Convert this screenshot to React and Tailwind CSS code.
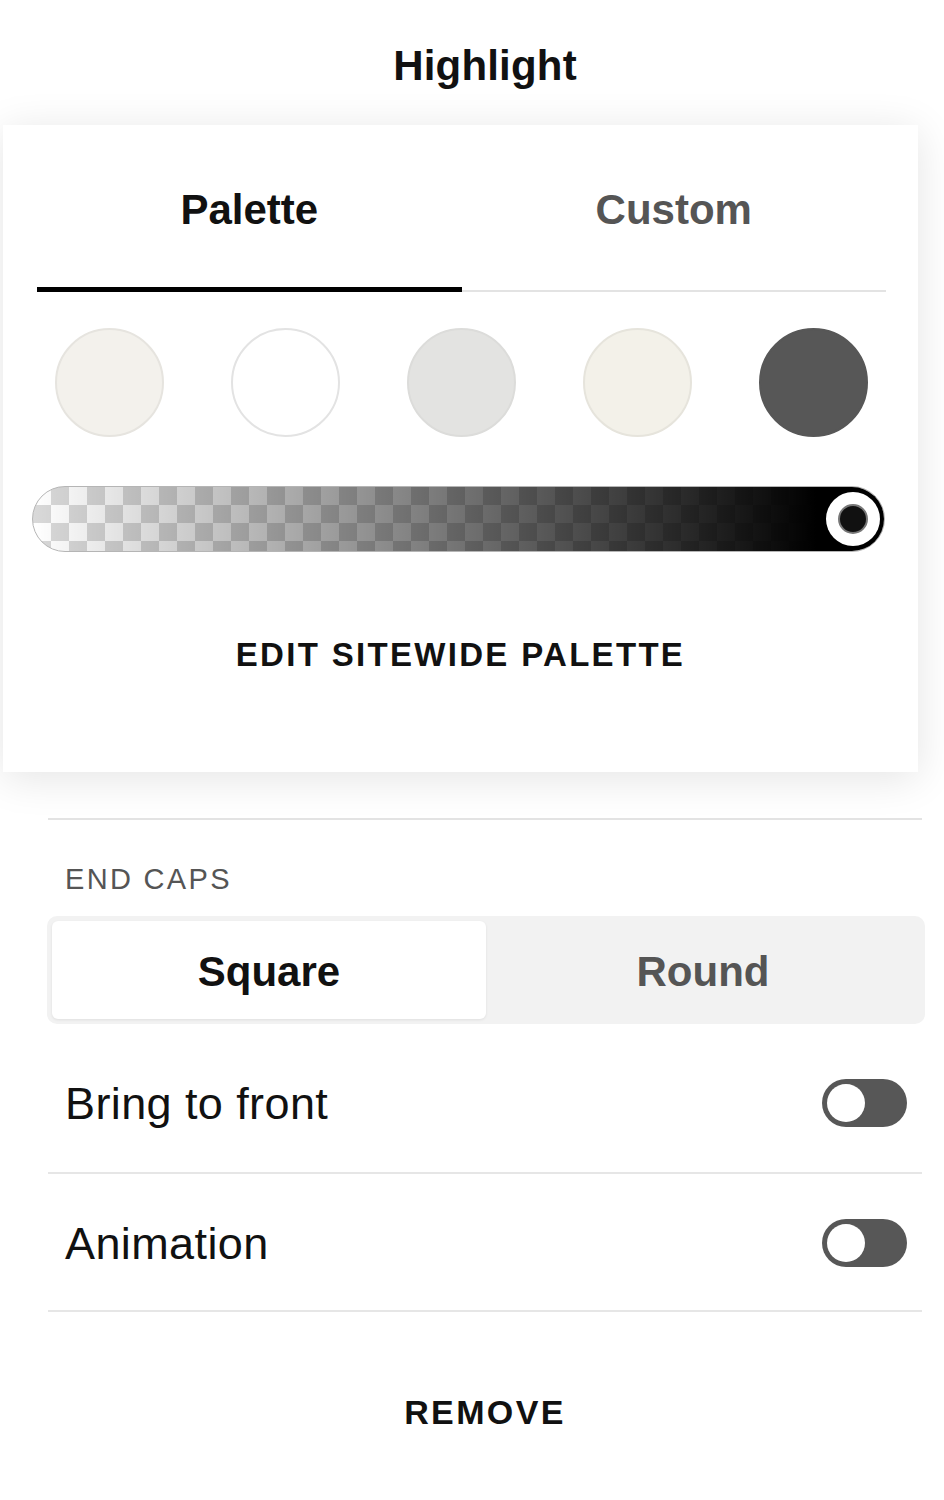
import React from "react";

function Toggle() {
  return (
    <div className="w-[85px] h-[48px] rounded-full bg-[#575757] p-[5px] flex items-center">
      <div className="w-[38px] h-[38px] rounded-full bg-white" />
    </div>
  );
}

export default function App() {
  const swatches = [
    "bg-[#f3f1ec] border-[#e6e4df]",
    "bg-white border-[#e3e3e3]",
    "bg-[#e3e3e1] border-[#dcdcda]",
    "bg-[#f3f1e9] border-[#e6e4dc]",
    "bg-[#575757] border-[#575757]",
  ];
  return (
    <div className="w-[944px] h-[1500px] bg-white overflow-hidden font-['Liberation_Sans',Arial,sans-serif] text-[#111]">
      {/* Title */}
      <div className="h-[125px] flex items-center justify-center pl-[26px] pt-[6px]">
        <span className="text-[42px] font-bold leading-none tracking-[0.2px]">Highlight</span>
      </div>

      {/* Popover card */}
      <div className="relative z-10 ml-[3px] w-[915px] h-[647px] bg-white shadow-[0_6px_40px_rgba(0,0,0,0.11)]">
        {/* Tabs */}
        <div className="ml-[34px] w-[849px] flex">
          <div className="flex-1 flex flex-col">
            <div className="h-[162px] flex items-center justify-center pt-[8px]">
              <span className="text-[42px] font-bold leading-none">Palette</span>
            </div>
            <div className="h-[5px] bg-black" />
          </div>
          <div className="flex-1 flex flex-col">
            <div className="h-[162px] flex items-center justify-center pt-[8px]">
              <span className="text-[42px] font-bold leading-none text-[#555]">Custom</span>
            </div>
            <div className="h-[5px] flex flex-col justify-end">
              <div className="h-[2px] bg-[#e3e3e3]" />
            </div>
          </div>
        </div>

        {/* Swatches */}
        <div className="ml-[34px] w-[849px] px-[18px] mt-[36px] flex justify-between">
          {swatches.map((c, i) => (
            <div key={i} className={`w-[109px] h-[109px] rounded-full border-2 ${c}`} />
          ))}
        </div>

        {/* Opacity slider */}
        <div className="relative ml-[29px] mt-[49px] w-[853px] h-[66px] rounded-full overflow-hidden border border-[#b5b5b5] bg-[conic-gradient(#d9d9d9_25%,#ffffff_0_50%,#d9d9d9_0_75%,#ffffff_0)] bg-[length:36px_36px]">
          <div className="h-full w-full bg-linear-to-r from-transparent via-[rgba(0,0,0,0.55)] to-black to-[92%]" />
          <div className="absolute right-[4px] top-1/2 -translate-y-1/2 w-[54px] h-[54px] rounded-full bg-white flex items-center justify-center">
            <div className="w-[30px] h-[30px] rounded-full bg-[#111] border-2 border-[#777]" />
          </div>
        </div>

        {/* Edit sitewide palette */}
        <div className="mt-[83px] text-center text-[33px] font-bold leading-[40px] tracking-[0.07em]">
          EDIT SITEWIDE PALETTE
        </div>
      </div>

      {/* Panel content */}
      <div className="ml-[48px] w-[874px]">
        <div className="mt-[46px] h-[2px] bg-[#e3e3e3]" />

        <div className="mt-[42px] pl-[17px] text-[29px] leading-[34px] tracking-[0.08em] text-[#555]">
          END CAPS
        </div>

        <div className="mt-[20px] -ml-[1px] w-[878px] h-[108px] rounded-[10px] bg-[#f2f2f2] p-[5px] grid grid-cols-2">
          <div className="rounded-[6px] bg-white shadow-[0_1px_3px_rgba(0,0,0,0.08)] flex items-center justify-center pt-[3px]">
            <span className="text-[42px] font-bold leading-none">Square</span>
          </div>
          <div className="flex items-center justify-center pt-[3px]">
            <span className="text-[42px] font-bold leading-none text-[#555]">Round</span>
          </div>
        </div>

        <div className="h-[148px] pl-[17px] pr-[15px] pt-[10px] flex items-center justify-between">
          <span className="text-[45px] leading-none tracking-[0.4px]">Bring to front</span>
          <Toggle />
        </div>
        <div className="h-[2px] bg-[#e6e6e6]" />

        <div className="h-[136px] pl-[17px] pr-[15px] pt-[2px] flex items-center justify-between">
          <span className="text-[45px] leading-none tracking-[0.4px]">Animation</span>
          <Toggle />
        </div>
        <div className="h-[2px] bg-[#e6e6e6]" />

        <div className="mt-[80px] text-center text-[34px] font-bold leading-[40px] tracking-[0.07em]">
          REMOVE
        </div>
      </div>
    </div>
  );
}
